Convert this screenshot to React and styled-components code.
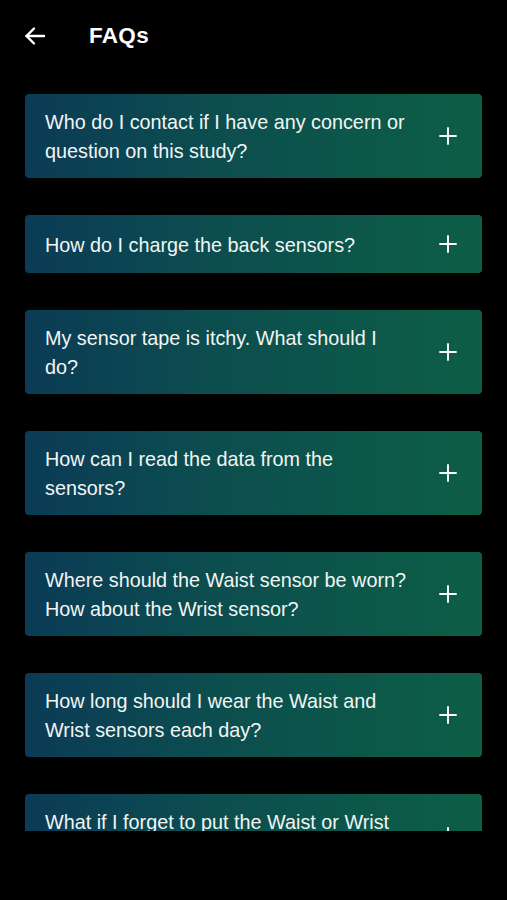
import React from "react";
import styled, { createGlobalStyle } from "styled-components";

const Global = createGlobalStyle`
  html, body { margin: 0; padding: 0; background: #000; }
  body { font-family: "Liberation Sans", Arial, sans-serif; color: #fff; }
`;

const Page = styled.div`
  width: 507px;
  height: 900px;
  background: #000;
  display: flex;
  flex-direction: column;
`;

const Header = styled.header`
  height: 72px;
  display: flex;
  align-items: center;
  padding: 0 0 0 22px;
  gap: 41px;
  box-sizing: border-box;
`;

const BackButton = styled.button`
  background: none;
  border: none;
  padding: 0;
  width: 26px;
  height: 26px;
  display: flex;
  align-items: center;
  justify-content: center;
  color: #fff;
`;

const Title = styled.h1`
  margin: 0;
  font-size: 22.5px;
  font-weight: 700;
  letter-spacing: 0.3px;
`;

const Scroll = styled.div`
  height: 759px;
  overflow: hidden;
  padding: 22px 25px 0 25px;
  box-sizing: border-box;
  display: flex;
  flex-direction: column;
  gap: 37px;
`;

const Card = styled.div`
  flex-shrink: 0;
  min-height: 58px;
  box-sizing: border-box;
  border-radius: 4px;
  background: linear-gradient(90deg, #0b3b56 0%, #0c4f4e 45%, #0d5e46 100%);
  display: flex;
  align-items: center;
  gap: 29px;
  padding: 14px 25px 12px 20px;
`;

const Question = styled.div`
  flex: 1;
  font-size: 19.8px;
  line-height: 29px;
  color: #f2f5f4;
`;

const Plus = styled.svg`
  flex-shrink: 0;
  width: 18px;
  height: 18px;
  margin-top: -2px;
`;

const faqs = [
  "Who do I contact if I have any concern or question on this study?",
  "How do I charge the back sensors?",
  "My sensor tape is itchy. What should I do?",
  "How can I read the data from the sensors?",
  "Where should the Waist sensor be worn? How about the Wrist sensor?",
  "How long should I wear the Waist and Wrist sensors each day?",
  "What if I forget to put the Waist or Wrist sensors on?",
];

export default function App() {
  return (
    <Page>
      <Global />
      <Header>
        <BackButton aria-label="Back">
          <svg width="24" height="24" viewBox="0 0 24 24" fill="none" stroke="#fff" strokeWidth="2.4" strokeLinecap="round" strokeLinejoin="round">
            <path d="M21 12H3.5" />
            <path d="M11 4.5L3.5 12l7.5 7.5" />
          </svg>
        </BackButton>
        <Title>FAQs</Title>
      </Header>
      <Scroll>
        {faqs.map((q) => (
          <Card key={q}>
            <Question>{q}</Question>
            <Plus viewBox="0 0 18 18" fill="none" stroke="#fff" strokeWidth="1.9" strokeLinecap="round">
              <path d="M9 1v16M1 9h16" />
            </Plus>
          </Card>
        ))}
      </Scroll>
    </Page>
  );
}
